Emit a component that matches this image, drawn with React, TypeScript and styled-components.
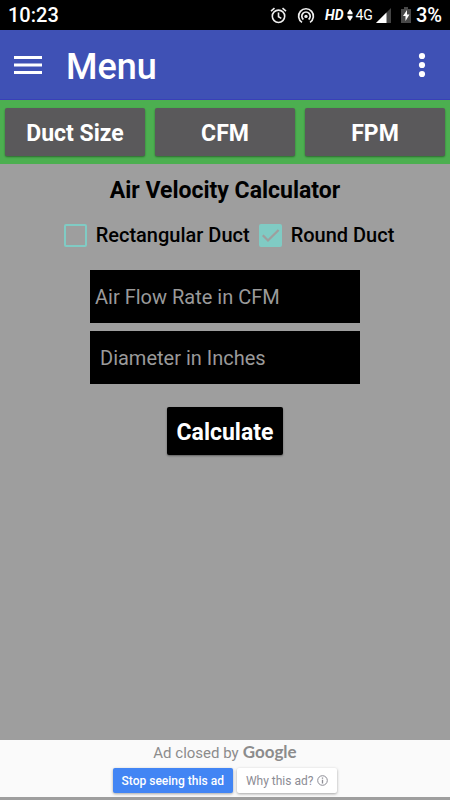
import React, { useState } from "react";
import styled, { createGlobalStyle } from "styled-components";

const GlobalStyle = createGlobalStyle`
  * { box-sizing: border-box; }
  html, body { margin: 0; background: #9e9e9e; }
  body, button, input { font-family: Roboto, "Noto Sans", sans-serif; }
  button { border: 0; cursor: pointer; }
`;

const Screen = styled.div`
  display: flex;
  flex-direction: column;
  min-height: 100vh;
  background: #9e9e9e;
`;

const StatusBar = styled.div`
  display: flex;
  align-items: center;
  justify-content: space-between;
  height: 30px;
  padding: 0 8px;
  background: #000;
  color: #fff;
  font-size: 20px;
  line-height: 30px;
  font-weight: 500;
`;

const StatusIcons = styled.div`
  display: flex;
  align-items: center;
  gap: 10px;
  svg { display: block; }
`;

const Network = styled.div`
  display: flex;
  align-items: center;
  gap: 3px;
`;

const HdLabel = styled.span`
  font-size: 14px;
  font-weight: 700;
  font-style: italic;
`;

const NetworkLabel = styled.span`
  font-size: 14px;
  font-weight: 400;
`;

const Battery = styled.div`
  display: flex;
  align-items: center;
  gap: 5px;
`;

const AppBar = styled.header`
  display: flex;
  align-items: center;
  height: 70px;
  padding: 0 14px;
  background: #3f51b5;
  border-bottom: 1px solid #3a3fb8;
  color: #fff;
`;

const IconButton = styled.button`
  display: flex;
  padding: 0;
  background: none;
  color: inherit;
`;

const Title = styled.h1`
  flex: 1;
  margin: 4px 0 0 24px;
  font-size: 36px;
  line-height: 44px;
  font-weight: 500;
`;

const Tabs = styled.nav`
  display: grid;
  grid-template-columns: repeat(3, 1fr);
  gap: 10px;
  padding: 8px 5px;
  background: #4caf50;
`;

const RaisedButton = styled.button<{ $dark?: boolean }>`
  height: 48px;
  padding: 2px 10px 0;
  border-radius: 2px;
  background: ${(p) => (p.$dark ? "#000" : "#5a595b")};
  color: #fff;
  font-size: 23px;
  font-weight: 700;
  box-shadow: 0 1px 2px rgba(0, 0, 0, 0.4);
`;

const Main = styled.main`
  display: flex;
  flex: 1;
  flex-direction: column;
  align-items: center;
`;

const Heading = styled.h2`
  margin: 13px 0 0;
  font-size: 23px;
  line-height: 28px;
  font-weight: 700;
  color: #000;
`;

const Options = styled.div`
  display: flex;
  gap: 9px;
  margin: 14px 0 19px;
  padding-left: 8px;
`;

const Option = styled.label`
  display: flex;
  align-items: center;
  gap: 9px;
  font-size: 20px;
  line-height: 32px;
  font-weight: 500;
  color: #000;
`;

const BoxWrap = styled.span`
  display: grid;
  svg { grid-area: 1 / 1; pointer-events: none; }
`;

const Check = styled.input`
  grid-area: 1 / 1;
  appearance: none;
  width: 23px;
  height: 23px;
  margin: 0;
  border: 2px solid #80cbc4;
  border-radius: 2px;
  &:checked { background: #80cbc4; }
`;

const Fields = styled.div`
  display: grid;
  gap: 8px;
  width: 60%;
  margin-bottom: 23px;
`;

const Field = styled.input<{ $inset: number }>`
  width: 100%;
  height: 53px;
  padding: 0 ${(p) => p.$inset}px;
  border: 0;
  border-radius: 0;
  background: #000;
  color: #fff;
  font-size: 20px;
  &::placeholder { color: #9a9a9a; opacity: 1; }
`;

const Ad = styled.footer`
  display: flex;
  flex-direction: column;
  align-items: center;
  margin-bottom: 3px;
  padding-bottom: 4px;
  background: #fafafa;
`;

const AdText = styled.div`
  display: flex;
  align-items: baseline;
  gap: 4px;
  height: 28px;
  font-size: 15px;
  line-height: 24px;
  color: #8c8c8c;
`;

const Google = styled.span`
  font-family: Lato, Roboto, sans-serif;
  font-size: 17px;
  font-weight: 700;
  color: #8c8c8c;
`;

const AdActions = styled.div`
  display: flex;
  gap: 4px;
`;

const AdButton = styled.button<{ $primary?: boolean }>`
  display: flex;
  align-items: center;
  gap: 4px;
  height: 25px;
  padding: 0 9px;
  border-radius: 2px;
  background: ${(p) => (p.$primary ? "#4285f4" : "#fff")};
  color: ${(p) => (p.$primary ? "#fff" : "#8c8c94")};
  font-size: 12px;
  font-weight: ${(p) => (p.$primary ? 500 : 400)};
  box-shadow: 0 1px 3px rgba(0, 0, 0, 0.35);
`;

const AlarmIcon = () => (
  <svg width="17" height="17" viewBox="0 0 17 17" fill="none" stroke="#eee" strokeWidth="1.6">
    <circle cx="8.5" cy="9.3" r="6.2" />
    <path d="M8.5 5.5v4.2l2.8 1.7M1 4.2l3.5-3M16 4.2l-3.5-3" />
  </svg>
);

const HotspotIcon = () => (
  <svg width="18" height="17" viewBox="0 0 18 17" fill="none" stroke="#eee" strokeWidth="1.7">
    <path d="M5 15.4a7.4 7.4 0 1 1 8 0M6.4 12.5a4.2 4.2 0 1 1 5.2 0" />
    <circle cx="9" cy="9.4" r="1.7" fill="#eee" stroke="none" />
  </svg>
);

const DataArrows = () => (
  <svg width="6" height="14" viewBox="0 0 7 14" fill="#fff">
    <path d="M3.5 0L6.5 4.5V6h-6V4.5zM.5 8h6v1.5L3.5 14 .5 9.5z" />
  </svg>
);

const SignalIcon = () => (
  <svg width="15" height="15" viewBox="0 0 15 15">
    <path d="M15 0v15H0z" fill="#444" />
    <path d="M10.5 4.5V15H0z" fill="#fff" />
  </svg>
);

const BatteryIcon = () => (
  <svg width="10" height="16" viewBox="0 0 10 16">
    <path d="M3 0h4v2h3v14H0V2h3z" fill="#484848" />
    <path d="M6 3L2 9h2.500v5L8.500 7.500H6z" fill="#fff" />
  </svg>
);

const MenuIcon = () => (
  <svg width="28" height="20" viewBox="0 0 28 20" fill="currentColor">
    <path d="M0 1h28v3H0zM0 8.500h28v3H0zM0 16h28v3H0z" />
  </svg>
);

const MoreIcon = () => (
  <svg width="28" height="28" viewBox="0 0 28 28" fill="currentColor">
    <circle cx="14" cy="5" r="3.1" />
    <circle cx="14" cy="14" r="3.1" />
    <circle cx="14" cy="23" r="3.1" />
  </svg>
);

const TickIcon = () => (
  <svg width="23" height="23" viewBox="0 0 23 23" fill="none" stroke="#9e9e9e" strokeWidth="2.3">
    <path d="M3.8 11.3l5.2 5.2L19.600 6" />
  </svg>
);

const InfoIcon = () => (
  <svg width="11" height="11" viewBox="0 0 11 11" fill="none" stroke="currentColor">
    <circle cx="5.5" cy="5.5" r="4.8" />
    <path d="M5.5 4.8v3.7M5.5 2.5v1.3" strokeWidth="1.3" />
  </svg>
);

type Shape = "Rectangular Duct" | "Round Duct";
const shapes: Shape[] = ["Rectangular Duct", "Round Duct"];

export default function App() {
  const [shape, setShape] = useState<Shape>("Round Duct");
  return (
    <>
      <GlobalStyle />
      <Screen>
        <StatusBar>
          <span>10:23</span>
          <StatusIcons>
            <AlarmIcon />
            <HotspotIcon />
            <Network>
              <HdLabel>HD</HdLabel>
              <DataArrows />
              <NetworkLabel>4G</NetworkLabel>
              <SignalIcon />
            </Network>
            <Battery>
              <BatteryIcon />
              <span>3%</span>
            </Battery>
          </StatusIcons>
        </StatusBar>
        <AppBar>
          <IconButton aria-label="Open menu"><MenuIcon /></IconButton>
          <Title>Menu</Title>
          <IconButton aria-label="More options"><MoreIcon /></IconButton>
        </AppBar>
        <Tabs>
          <RaisedButton>Duct Size</RaisedButton>
          <RaisedButton>CFM</RaisedButton>
          <RaisedButton>FPM</RaisedButton>
        </Tabs>
        <Main>
          <Heading>Air Velocity Calculator</Heading>
          <Options>
            {shapes.map((name) => (
              <Option key={name}>
                <BoxWrap>
                  <Check type="checkbox" checked={shape === name} onChange={() => setShape(name)} />
                  {shape === name && <TickIcon />}
                </BoxWrap>
                {name}
              </Option>
            ))}
          </Options>
          <Fields>
            <Field $inset={5} aria-label="Air Flow Rate in CFM" placeholder="Air Flow Rate in CFM" />
            <Field $inset={10} aria-label="Diameter in Inches" placeholder="Diameter in Inches" />
          </Fields>
          <RaisedButton $dark>Calculate</RaisedButton>
        </Main>
        <Ad>
          <AdText>Ad closed by <Google>Google</Google></AdText>
          <AdActions>
            <AdButton $primary>Stop seeing this ad</AdButton>
            <AdButton>Why this ad? <InfoIcon /></AdButton>
          </AdActions>
        </Ad>
      </Screen>
    </>
  );
}
